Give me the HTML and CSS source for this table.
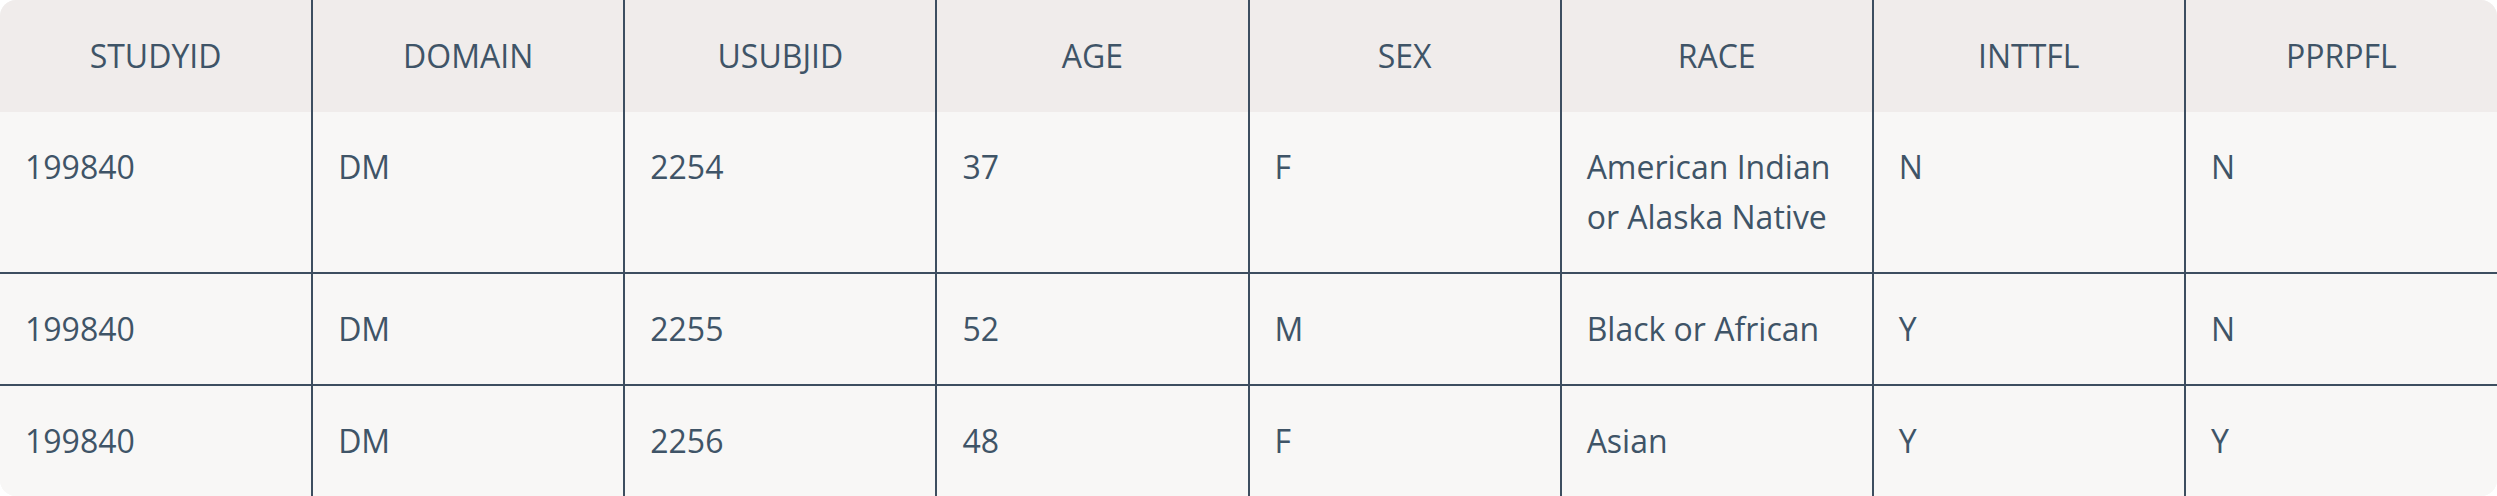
FILE: index.html
```html
<!DOCTYPE html>
<html lang="en">
<head>
<meta charset="utf-8">
<title>Demographics</title>
<link rel="stylesheet" href="styles.css">
</head>
<body>
<div class="wrap">
  <table class="grid">
    <thead>
      <tr>
        <th>STUDYID</th><th>DOMAIN</th><th>USUBJID</th><th>AGE</th><th>SEX</th><th>RACE</th><th>INTTFL</th><th>PPRPFL</th>
      </tr>
    </thead>
    <tbody>
      <tr>
        <td>199840</td><td>DM</td><td>2254</td><td>37</td><td>F</td><td>American Indian or Alaska Native</td><td>N</td><td>N</td>
      </tr>
      <tr>
        <td>199840</td><td>DM</td><td>2255</td><td>52</td><td>M</td><td>Black or African</td><td>Y</td><td>N</td>
      </tr>
      <tr>
        <td>199840</td><td>DM</td><td>2256</td><td>48</td><td>F</td><td>Asian</td><td>Y</td><td>Y</td>
      </tr>
    </tbody>
  </table>
</div>
</body>
</html>
```
FILE: styles.css
```css
html, body {
  margin: 0;
  padding: 0;
  background: #ffffff;
}
body {
  font-family: "Open Sans", "Noto Sans", sans-serif;
  color: #3f5467;
}
.wrap {
  width: 2497px;
  border-radius: 16px;
  overflow: hidden;
  background: #f8f7f6;
}
.grid {
  width: 100%;
  table-layout: fixed;
  border-collapse: collapse;
  font-size: 32px;
  line-height: 50px;
}
.grid th {
  background: #f0eceb;
  font-weight: 400;
  text-align: center;
  padding: 31px 25px;
}
.grid td {
  text-align: left;
  vertical-align: top;
  padding: 30px 25px;
  background: #f8f7f6;
}
.grid th + th,
.grid td + td {
  border-left: 2px solid #3d4e60;
}
.grid tbody tr + tr td {
  border-top: 2px solid #3d4e60;
}
```
